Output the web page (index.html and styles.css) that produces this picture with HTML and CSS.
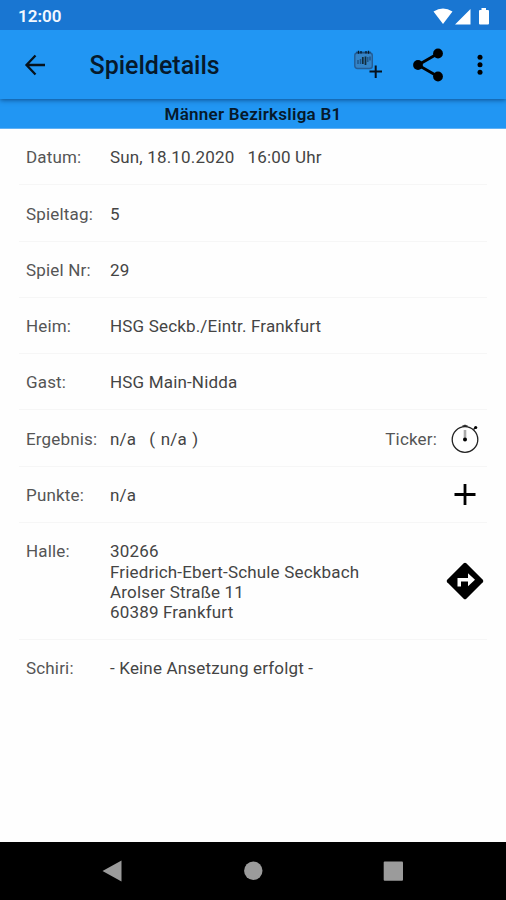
FILE: index.html
```html
<!DOCTYPE html>
<html lang="de">
<head>
<meta charset="utf-8">
<title>Spieldetails</title>
<link rel="stylesheet" href="styles.css">
</head>
<body>
<div class="screen">
  <div class="status">
    <span class="clock">12:00</span>
    <svg width="60" height="20" viewBox="0 0 60 20" fill="#fff"><path d="M.5 5.500Q10-.5 19.500 5.500L10 18zM37.500 3v15.500H22zM46 5q0-1 1-1h1.500V2h4.500v2H55q1 0 1 1v12.500q0 1-1 1h-8q-1 0-1-1z"/></svg>
  </div>
  <header class="bar">
    <svg class="back" width="22" height="22" viewBox="0 0 22 22" fill="none" stroke="#06121d" stroke-width="2.300"><path d="M11.500 1.500L2.500 11l9 9.500M2.500 11H21"/></svg>
    <h1>Spieldetails</h1>
    <svg class="calendar" width="30" height="30" viewBox="0 0 30 30" fill="none">
      <rect x="1.800" y="3" width="17.500" height="15.500" rx="2.500" fill="#3484c8" stroke="#245d95" stroke-width="1.400"/>
      <path d="M3 2.200h15" stroke="#164474"/>
      <path d="M5.500 .8v3M8 1v2.500M13 1v2.500M15.500 .8v3" stroke="#071827" stroke-width="1.300"/>
      <path d="M5 10v4M7.500 9v5M14.800 7v5M17 6.500v4" stroke="#1c5386" stroke-width="1.400"/>
      <path d="M9.800 7v7M12.500 6.500V15" stroke="#112c3c" stroke-width="1.700"/>
      <path d="M16.500 21.500H29M22.700 15.500V28" stroke="#06121d" stroke-width="2"/>
    </svg>
    <svg class="share" width="32" height="34" viewBox="0 0 32 34"><path d="M26 5.500L6 17 26 28.500" fill="none" stroke="#000" stroke-width="2.800"/><circle cx="26" cy="5.500" r="4.900"/><circle cx="6" cy="17" r="4.900"/><circle cx="26" cy="28.500" r="4.900"/></svg>
    <svg class="more" width="6" height="22" viewBox="0 0 6 22"><circle cx="3" cy="3.200" r="2.500"/><circle cx="3" cy="10.800" r="2.500"/><circle cx="3" cy="18.300" r="2.500"/></svg>
  </header>
  <div class="league">Männer Bezirksliga B1</div>
  <main>
    <div class="row"><span class="label">Datum:</span><span class="value">Sun, 18.10.2020 &nbsp; 16:00 Uhr</span></div>
    <div class="row"><span class="label">Spieltag:</span><span class="value">5</span></div>
    <div class="row"><span class="label">Spiel Nr:</span><span class="value">29</span></div>
    <div class="row"><span class="label">Heim:</span><span class="value">HSG Seckb./Eintr. Frankfurt</span></div>
    <div class="row"><span class="label">Gast:</span><span class="value">HSG Main-Nidda</span></div>
    <div class="row"><span class="label">Ergebnis:</span><span class="value">n/a &nbsp; <span class="half">( n/a )</span></span><span class="ticker">Ticker:</span>
      <svg class="icon" width="38" height="38" viewBox="0 0 38 38"><circle cx="19" cy="19.500" r="12.800" fill="none" stroke="#222" stroke-width="1.300"/><path d="M16.500 6h5M19 4.800v2M27.500 9.500l2-2" stroke="#222" stroke-width="1.500"/><circle cx="29.700" cy="7.500" r="1.600"/><path d="M19 10v9" stroke="#aaa" stroke-width="2.600"/><circle cx="19" cy="19.500" r="2"/></svg>
    </div>
    <div class="row"><span class="label">Punkte:</span><span class="value">n/a</span>
      <svg class="icon" width="38" height="38" viewBox="0 0 38 38"><path d="M8.500 18.500h21M19 8v21" stroke="#000" stroke-width="2.800"/></svg>
    </div>
    <div class="row hall"><span class="label">Halle:</span><span class="value">30266<br>Friedrich-Ebert-Schule Seckbach<br>Arolser Straße 11<br>60389 Frankfurt</span>
      <svg class="icon" width="38" height="38" viewBox="0 0 38 38"><path d="M17.700 1.200q1.300-1.100 2.600 0L36.800 17.700q1.100 1.300 0 2.600L20.300 36.800q-1.300 1.100-2.600 0L1.200 20.300q-1.100-1.300 0-2.600z"/><path d="M11.500 24.500V16H22v-4.800l7 6.500-7 6.500v-4.700h-7v5z" fill="#fff"/></svg>
    </div>
    <div class="row last"><span class="label">Schiri:</span><span class="value">- Keine Ansetzung erfolgt -</span></div>
  </main>
  <nav>
    <svg width="506" height="58" viewBox="0 0 506 58" fill="#9b9b9b"><path d="M102.500 29L121.500 18.500v21z"/><circle cx="253.300" cy="28.800" r="9.200"/><rect x="383.700" y="19.500" width="19.300" height="19.300" rx="1"/></svg>
  </nav>
</div>
</body>
</html>
```
FILE: styles.css
```css
* { box-sizing: border-box; }
body { margin: 0; font-family: Roboto, sans-serif; }
svg { display: block; flex: none; }
.screen { width: 506px; height: 900px; display: flex; flex-direction: column; background: #fefefe; overflow: hidden; }
.status { height: 30px; flex: none; background: #1976d2; display: flex; justify-content: space-between; align-items: center; padding: 2px 13px 0 18px; color: #f3f8ff; }
.status svg { margin-top: -1px; }
.clock { font-size: 17px; font-weight: 600; line-height: 20px; }
.bar { height: 69px; flex: none; background: #2196f3; display: flex; align-items: center; padding: 0 23px 0 24px; box-shadow: 0 1px 5px rgba(0, 30, 70, .6); clip-path: inset(0 0 -8px 0); z-index: 1; }
h1 { margin: 3px 0 0 43.5px; font-size: 25px; font-weight: 500; line-height: 30px; color: #06192b; flex: 1; }
.calendar { margin-right: 29px; }
.share { margin-right: 33px; }
.league { height: 30px; flex: none; background: #2196f3; border-bottom: 1px solid #60b1f4; text-align: center; font-size: 17px; font-weight: 600; letter-spacing: .25px; line-height: 31px; color: #06192b; }
main { flex: 1; padding: 0 19px; font-size: 17px; line-height: 20.2px; letter-spacing: .17px; color: #555; font-weight: 400; }
.row { height: 56.3px; display: flex; align-items: flex-start; padding: 18.3px 3px 0 7px; border-bottom: 1px solid #f6f6f6; }
.label { width: 84px; flex: none; }
.value { flex: 1; color: #444; }
.half { word-spacing: 1px; }
.ticker { margin-right: 9px; }
.icon { margin-top: -9px; }
.hall { height: 117px; }
.hall .icon { margin-top: 20.2px; }
.last { border: 0; }
nav { height: 58px; flex: none; background: #000; }
```
